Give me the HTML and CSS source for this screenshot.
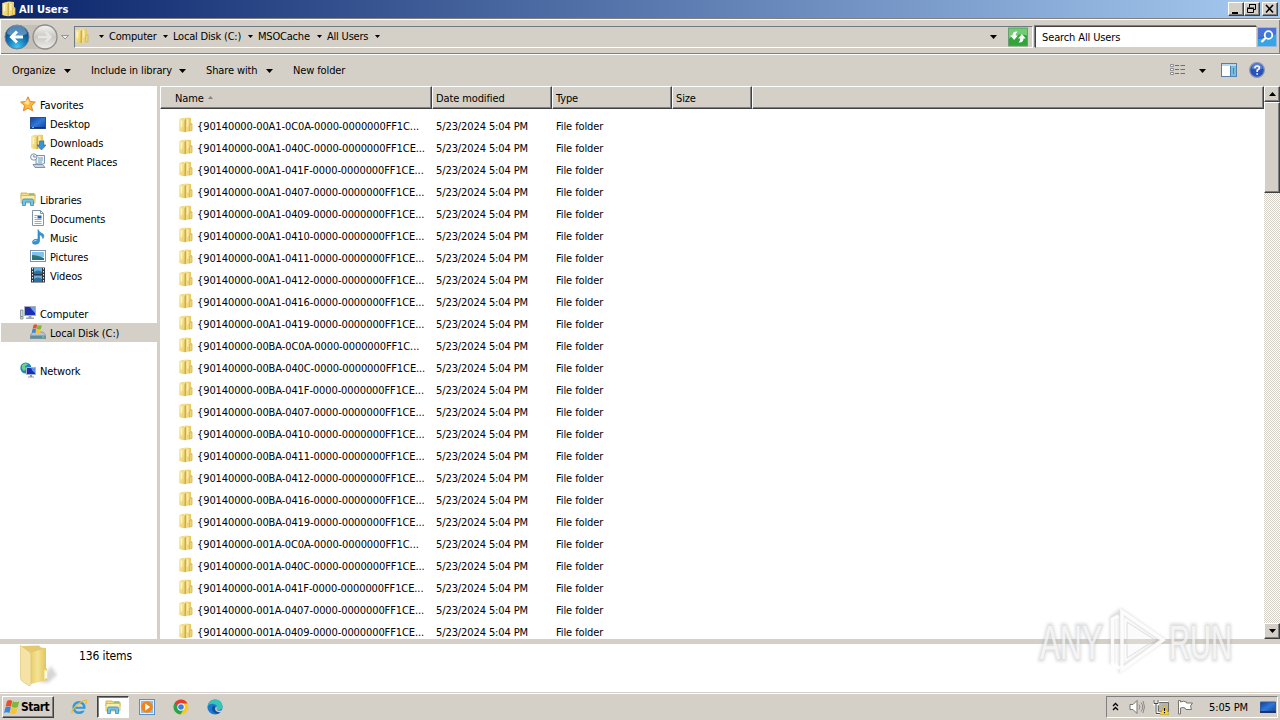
FILE: index.html
```html
<!DOCTYPE html>
<html lang="en">
<head>
  <meta charset="UTF-8" />
  <title>All Users</title>
  <link rel="stylesheet" href="styles.css">
</head>
<body>
  <svg class="defs" width="0" height="0">
    <defs>
      <linearGradient id="gold" x1="0" x2="1" y1="0" y2="0">
        <stop offset="0" stop-color="#e6cc6a" /><stop offset=".45" stop-color="#f5e394" /><stop offset="1" stop-color="#e0c255" />
      </linearGradient>
      <linearGradient id="flap" x1="0" x2="1" y1="0" y2="1">
        <stop offset="0" stop-color="#fbf0b4" /><stop offset="1" stop-color="#e9cd62" />
      </linearGradient>
      <linearGradient id="blue" x1="0" x2="1" y1="0" y2="1">
        <stop offset="0" stop-color="#123f9a" /><stop offset=".5" stop-color="#2f78d8" /><stop offset="1" stop-color="#173f96" />
      </linearGradient>
      <radialGradient id="orb" cx=".5" cy=".9" r=".8">
        <stop offset="0" stop-color="#3fc8f5" /><stop offset=".5" stop-color="#1477b8" /><stop offset="1" stop-color="#0d3f78" />
      </radialGradient>
      <linearGradient id="silver" x1="0" x2="0" y1="0" y2="1">
        <stop offset="0" stop-color="#f4f4f2" /><stop offset=".5" stop-color="#c9c7c3" /><stop offset="1" stop-color="#f0efed" />
      </linearGradient>
      <filter id="soft" x="-20%" y="-20%" width="140%" height="140%"><feGaussianBlur stdDeviation="1.800" /></filter>
      <symbol id="folder" viewBox="0 0 16 16">
        <path d="M1.500 2q3.500-1.500 6.500-1.500L13 1v5l1.200.8v6.700L8 15.300 1.500 14z" fill="url(#gold)" />
        <path d="M1.500 2 6.500 3v12.200l-5-1.200z" fill="url(#flap)" />
        <path d="M6.500 3 8 1.500v13.300l-1.500.4z" fill="#cfab40" />
        <path d="M11.500 7.500 14 6.800v6.700l-2.500.7z" fill="#ecd478" stroke="#caa944" stroke-width=".5" />
        <path d="M3.500 4v6M9.800 2.500v7" stroke="#fffbe0" stroke-width="1.200" opacity=".8" />
      </symbol>
      <symbol id="library" viewBox="0 0 16 16">
        <path d="M1 2h6l1 1h7v4H1z" fill="#f3dc83" stroke="#c9a544" stroke-width=".8" />
        <path d="M1 4.500h14V12H1z" fill="#faeea8" stroke="#cfb052" stroke-width=".8" />
        <path d="M9 3h5" stroke="#53b16b" />
        <path d="M2.500 14.500V9.500q0-1.500 1.500-1.500h8q1.500 0 1.500 1.500v5h-3V11h-5v3.500z" fill="#74c3ea" stroke="#338cc0" stroke-width=".8" />
      </symbol>
      <symbol id="flag" viewBox="0 0 16 16">
        <path d="M3 2q3-2 5.200 0L7 7.700q-2.500-1.500-5.400 0z" fill="#e8502a" />
        <path d="M8.800 2.200q3.200 1.600 6.400.3L13.800 8Q11 9.300 7.600 7.900z" fill="#7db83a" />
        <path d="M1.400 8.400q3-1.600 5.400 0L5.400 14q-2.500-1.600-5.400 0z" fill="#3a86d8" />
        <path d="M7.400 8.600q3.200 1.600 6.200.3L12.200 14.500q-3 1-6.200-.3z" fill="#f7c52e" />
      </symbol>
      <symbol id="down" viewBox="0 0 7 4"><path d="M0 0h7L3.500 4z" /></symbol>
    </defs>
  </svg>

  <div class="titlebar">
    <svg class="icon" viewBox="0 0 16 16"><use href="#folder" /></svg>
    <span class="title-text">All Users</span>
    <div class="win-buttons">
      <span class="win-btn"><svg viewBox="0 0 16 14"><path d="M4 10h6v2H4z" /></svg></span>
      <span class="win-btn"><svg viewBox="0 0 16 14"><path d="M5.500 5.500v-3h6v5h-2M5 2.500h7M3.500 6.500h6v4h-6zM3 6h7" fill="none" stroke="#000" /></svg></span>
      <span class="win-btn win-close"><svg viewBox="0 0 16 14"><path d="m4 3 7 7.500M11 3l-7 7.500" stroke="#000" stroke-width="1.600" /></svg></span>
    </div>
  </div>

  <div class="navbar">
    <svg class="travel" viewBox="0 0 68 30">
      <path d="M14 3h30q4 0 12 6v12q-8 6-12 6H14z" fill="#c4c0b8" />
      <circle cx="16" cy="15" r="12" fill="url(#orb)" stroke="#6d7f92" />
      <path d="M6 12a10 9 0 0 1 20 0q-10 4-20 0z" fill="#8fc0e2" opacity=".55" />
      <path d="M22 15H11M16 9.500 10.500 15l5.500 5.500" fill="none" stroke="#fff" stroke-width="3" />
      <circle cx="44" cy="15" r="12" fill="url(#silver)" stroke="#8f8d88" stroke-width="1.300" />
      <path d="M37 15h12M44.500 10l5 5-5 5" fill="none" stroke="#e6e5e3" stroke-width="2.500" />
      <path d="M60.500 13.500h7L64 17z" fill="#eee" stroke="#85827c" stroke-width=".8" />
    </svg>
    <div class="address">
      <svg class="icon" viewBox="0 0 16 16"><use href="#folder" /></svg>
      <svg class="crumb-arrow first-arrow"><use href="#down" /></svg>
      <div class="crumbs">
        <span class="crumb">Computer<svg class="crumb-arrow"><use href="#down" /></svg></span>
        <span class="crumb">Local Disk (C:)<svg class="crumb-arrow"><use href="#down" /></svg></span>
        <span class="crumb">MSOCache<svg class="crumb-arrow"><use href="#down" /></svg></span>
        <span class="crumb">All Users<svg class="crumb-arrow"><use href="#down" /></svg></span>
      </div>
      <svg class="arrow history"><use href="#down" /></svg>
      <svg class="refresh" viewBox="0 0 20 19">
        <rect x=".5" y=".5" width="19" height="18" fill="#2fa53a" stroke="#6f9b72" />
        <path d="M1 1h18v7Q10 5 1 11z" fill="#72cc76" />
        <path d="M9.500 4Q4.500 3.500 4.500 8H2.200l3.900 4.500L10 8H7.700q0-2 1.800-4zM10.500 15q5 .5 5-4h2.300l-3.900-4.500L10 11h2.300q0 2-1.800 4z" fill="#fff" />
      </svg>
    </div>
    <div class="search">Search All Users</div>
    <svg class="search-btn" viewBox="0 0 20 20">
      <rect x=".5" y=".5" width="19" height="19" fill="#2c67d0" stroke="#9cb6dd" />
      <path d="M1 12q9-1 18-5v12H1z" fill="#36a5e8" />
      <path d="M1 1h18v6Q10 9 1 11z" fill="#4b72d2" />
      <circle cx="11.500" cy="8" r="3.800" fill="#3c7edb" stroke="#fff" stroke-width="1.800" />
      <path d="m8.500 11-4 4" stroke="#fff" stroke-width="2.400" />
    </svg>
  </div>

  <div class="toolbar">
    <div class="commands">
      <span class="command cmd-organize">Organize<svg class="arrow"><use href="#down" /></svg></span>
      <span class="command cmd-include">Include in library<svg class="arrow"><use href="#down" /></svg></span>
      <span class="command cmd-share">Share with<svg class="arrow"><use href="#down" /></svg></span>
      <span class="command">New folder</span>
    </div>
    <div class="view-tools">
      <svg class="view-icon" viewBox="0 0 16 14">
        <path d="M.5 1.500h3v2h-3zM.5 5.500h3v2h-3zM.5 9.500h3v2h-3z" fill="#fff" stroke="#8a8d90" />
        <path d="M5 2.500h4M10.500 2.500H15M5 6.500h4M10.500 6.500H15M5 10.500h4M10.500 10.500H15" stroke="#6b7075" />
      </svg>
      <svg class="arrow view-arrow"><use href="#down" /></svg>
      <svg class="pane-icon" viewBox="0 0 16 14">
        <rect x=".5" y=".5" width="15" height="13" fill="#fff" stroke="#557fa8" />
        <path d="M1 1h14v2H1z" fill="#b9d7ee" /><path d="M10 3h5v10h-5z" fill="#78bce0" /><path d="M9.500 3v10M12.500 5v6" stroke="#4d7fae" />
      </svg>
      <svg class="help-icon" viewBox="0 0 16 16">
        <circle cx="8" cy="8" r="7.400" fill="#2852b8" stroke="#8b9ab5" stroke-width="1.200" />
        <path d="M2.500 6.500a5.500 5 0 0 1 11 0q-5 2-11 0z" fill="#7d9ee2" opacity=".6" />
        <path d="M5.800 6.200Q6 4 8.200 4t2.200 2Q10.400 7.300 8.200 8.300V10M8.200 11.200v1.600" fill="none" stroke="#fff" stroke-width="1.600" />
      </svg>
    </div>
  </div>

  <div class="content">
    <div class="sidebar">
      <div class="nav-item nav-root">
        <svg class="icon" viewBox="0 0 16 16"><path d="m8 .8 2.200 4.700 5.200.6-3.900 3.500 1.100 5.200L8 12.200l-4.600 2.600 1.100-5.200L.6 6.100l5.200-.6z" fill="#fbb740" stroke="#e07d1e" stroke-width=".9" /><path d="m8 3 1.500 3.500L8 9 4 7z" fill="#ffe39a" /></svg>
        <span>Favorites</span>
      </div>
      <div class="nav-item">
        <svg class="icon" viewBox="0 0 16 16"><rect x=".5" y="2.500" width="15" height="11" fill="url(#blue)" stroke="#2b4f8d" /><path d="M1 12h14v1.500H1z" fill="#1c3560" /><path d="M2 12.500h2" stroke="#6bd16b" /></svg>
        <span>Desktop</span>
      </div>
      <div class="nav-item">
        <svg class="icon" viewBox="0 0 16 16"><use href="#folder" /><path d="M9.500 7h4v4H16l-4.500 5L7 11h2.500z" fill="#3793dd" stroke="#1b65ad" stroke-width=".6" /></svg>
        <span>Downloads</span>
      </div>
      <div class="nav-item">
        <svg class="icon" viewBox="0 0 16 16"><path d="M6 2.500h8.500v8l-2 .5H6z" fill="#eef3f7" stroke="#7f93a6" /><path d="M3 11.500h9.500l2.500 3H5z" fill="#c9d6e2" stroke="#7f93a6" /><path d="M8 5h5M8 7h5M8 9h4" stroke="#6a9ac6" /><circle cx="3.800" cy="4" r="3.200" fill="#f4f8fb" stroke="#7f93a6" /><path d="M3.800 2v2h2" fill="none" stroke="#496c91" stroke-width=".8" /></svg>
        <span>Recent Places</span>
      </div>
      <div class="nav-item nav-root nav-group">
        <svg class="icon" viewBox="0 0 16 16"><use href="#library" /></svg>
        <span>Libraries</span>
      </div>
      <div class="nav-item">
        <svg class="icon" viewBox="0 0 16 16"><path d="M2.500.5h8l3 3v12h-11z" fill="#fff" stroke="#8395a8" /><path d="M10.500.5v3h3" fill="none" stroke="#8395a8" /><path d="M4.500 5.500h3M4.500 7.500h2M4.500 9.500h7M4.500 11.500h7M4.500 13.500h7" stroke="#95abc4" /><path d="M7.500 5.500h4v3h-4z" fill="#2664a6" /></svg>
        <span>Documents</span>
      </div>
      <div class="nav-item">
        <svg class="icon" viewBox="0 0 16 16"><path d="M8 .5q1 3 4 4t1 5q-.5-3-3.500-4V12q0 3-4 3.300-3.500 0-3-2.600.6-2.500 4-2.400H8z" fill="#3197d6" stroke="#2273b5" stroke-width=".6" /><path d="M3.500 12.500q1-1.500 3-1" stroke="#a5dcf8" fill="none" /></svg>
        <span>Music</span>
      </div>
      <div class="nav-item">
        <svg class="icon" viewBox="0 0 16 16"><rect x=".5" y="2.500" width="15" height="11" fill="#fff" stroke="#7d94ac" /><path d="M2 4h12v5H2z" fill="#80c3ec" /><path d="M2 7q5 0 12 3v2H2z" fill="#2c7c61" /><path d="M2 10.500q6-1 12 .5v1H2z" fill="#276ba4" /></svg>
        <span>Pictures</span>
      </div>
      <div class="nav-item">
        <svg class="icon" viewBox="0 0 16 16"><path d="M1 .5h14v15H1z" fill="#30363d" /><path d="M4 1h8v6H4zM4 8.500h8V15H4z" fill="#6aaedd" /><path d="M4 5q4-3 8 0v2H4zM4 12q4-3 8 0v3H4z" fill="#2f6f9f" /><path d="M2.500 1v14M13.500 1v14" stroke="#e8edf2" stroke-dasharray="1.500 1.500" /></svg>
        <span>Videos</span>
      </div>
      <div class="nav-item nav-root nav-group">
        <svg class="icon" viewBox="0 0 16 16"><path d="M.5 5h2.500v9H.5z" fill="#d3d8dc" stroke="#7b858f" stroke-width=".8" /><path d="M1 11.500h1.500" stroke="#3dae3d" /><path d="M4.500 1.500h11v9h-11z" fill="#1c2fae" stroke="#a8b0c0" /><path d="M10 2h5v6q-3-3-5-6z" fill="#6f9ef0" /><path d="M8.500 11h3v1.500H14V14H6v-1.500h2.500z" fill="#9ba5b2" /></svg>
        <span>Computer</span>
      </div>
      <div class="nav-item nav-selected">
        <svg class="icon" viewBox="0 0 16 16"><path d="M3 8h10l3 3.500v3H0v-3z" fill="#b6c4cd" stroke="#6b7c88" stroke-width=".6" /><path d="M.3 11.500h15.400v3H.3z" fill="#5e8d9f" /><path d="M12 13h2" stroke="#7bea86" /><svg x="1.500" y="-.5" width="11" height="11"><use href="#flag" /></svg></svg>
        <span>Local Disk (C:)</span>
      </div>
      <div class="nav-item nav-root nav-group">
        <svg class="icon" viewBox="0 0 16 16"><circle cx="5.800" cy="6" r="5.500" fill="#1d86b8" /><path d="M2 3q3-3 6-1-1 2-3 2l1 3-2 2Q1 7 2 3z" fill="#6fcf87" /><path d="M6.500 5.500h9v7h-9z" fill="#1a2fae" stroke="#a9b6ca" /><path d="M11 6h4v5q-3-2-4-5z" fill="#5f93ec" /><path d="M10 13h2v1.500h2v1H8v-1h2z" fill="#8a98a8" /></svg>
        <span>Network</span>
      </div>
    </div>

    <div class="file-pane">
      <div class="list-header">
        <span class="col col-name">Name<svg class="sort" viewBox="0 0 5 3"><path d="M2.500 0 5 3H0z" fill="#87837c" /></svg></span>
        <span class="col col-date">Date modified</span>
        <span class="col col-type">Type</span>
        <span class="col col-size">Size</span>
        <span class="col col-rest"></span>
      </div>
      <div class="file-list" id="file-list"></div>
    </div>

    <div class="scrollbar">
      <span class="scroll-btn"><svg class="arrow" viewBox="0 0 7 4"><path d="M3.500 0 7 4H0z" /></svg></span>
      <span class="scroll-thumb"></span>
      <span class="scroll-btn scroll-end"><svg class="arrow"><use href="#down" /></svg></span>
    </div>
  </div>

  <div class="details">
    <svg class="big-folder" viewBox="0 0 40 44">
      <path d="M20 38 32 22l6 9-9 8z" fill="#999" opacity=".4" filter="url(#soft)" />
      <path d="M3 2 20 1.500l2 2 4 .5v12L12 20z" fill="#e3ca72" />
      <path d="M11 9 27 4v20l1 1v11l-16 4z" fill="url(#gold)" />
      <path d="M1.500 1.500 10 7.500q2 1.500 2 4v28q0 3-2.500 2l-6-4Q1.500 36 1.500 33z" fill="#f5e3a6" stroke="#dcc069" stroke-width=".6" />
      <path d="M25 26q3.500-1 3.500 2v6.500L25 36z" fill="#f6e8a4" /><path d="M27 27v7" stroke="#fff" stroke-width="1.500" />
    </svg>
    <span class="item-count">136 items</span>
  </div>

  <div class="taskbar">
    <div class="start"><svg viewBox="0 0 16 16"><use href="#flag" /></svg><span>Start</span></div>
    <div class="task">
      <svg viewBox="0 0 16 16"><circle cx="8" cy="8.500" r="5.300" fill="none" stroke="#2d9be0" stroke-width="2.600" /><path d="M4 8.800h10" stroke="#2d9be0" stroke-width="2" /><path d="M10.500 10.800H15" stroke="#d4d0c8" stroke-width="1.800" /><path d="M1.500 14.500Q-.5 13 4 8t9-6.500 1.500 3.500" fill="none" stroke="#eebd32" stroke-width="1.300" /></svg>
    </div>
    <div class="task task-active"><svg viewBox="0 0 16 16"><use href="#library" /></svg></div>
    <div class="task">
      <svg viewBox="0 0 16 16"><rect x=".5" y=".5" width="15" height="15" fill="#e7f0f8" stroke="#5b91c6" /><rect x="2" y="2" width="12" height="12" fill="#93bce0" /><circle cx="8" cy="8" r="5.800" fill="#f08519" /><path d="m6.200 4.500 5 3.500-5 3.500z" fill="#fff" /></svg>
    </div>
    <div class="task">
      <svg viewBox="0 0 16 16"><circle cx="8" cy="8" r="7.500" fill="#f9c921" /><path d="M1.500 4.200A7.500 7.500 0 0 0 7.500 15.500L11 9.700 8 8z" fill="#2ba24c" /><path d="M1.500 4.200a7.500 7.500 0 0 1 13 .2H8L5 8z" fill="#e13d2f" /><circle cx="8" cy="8" r="3.700" fill="#fff" /><circle cx="8" cy="8" r="2.800" fill="#3d7de8" /></svg>
    </div>
    <div class="task">
      <svg viewBox="0 0 16 16"><circle cx="8" cy="8" r="7.600" fill="#1b78cc" /><path d="M.6 7Q2 .4 8.500.4q6.500.4 7.100 6.600 0 4-4 4-3 0-2-2 1-3-2.500-4Q3 4 .6 7z" fill="#39c3b4" /><path d="M6 7q-3 4 2 7 3 1.500 5.500-.5-3 .5-5-2-1.500-2-.5-4.500z" fill="#0f4f9e" /><path d="M9 7.500q1.500 1 .5 2.800.5 1.500 4 1.500l2.300-.8-1.600 2q-4 .6-5.500-1.500-1-2 .3-4z" fill="#d4d0c8" /></svg>
    </div>
    <div class="tray">
      <svg class="tray-more" viewBox="0 0 7 9"><path d="m1 4 2.500-2.500L6 4M1 8l2.500-2.500L6 8" fill="none" stroke="#000" stroke-width="1.300" /></svg>
      <svg class="tray-icon" viewBox="0 0 16 16"><path d="M1 5.500h3l4-4v13l-4-4H1z" fill="#fff" stroke="#77746f" /><path d="M10 5.500q2 2.500 0 5M12 3.500q3.500 4.500 0 9M14 2q3 6 0 12" fill="none" stroke="#8b8883" /></svg>
      <svg class="tray-icon tray-network" viewBox="0 0 16 16"><path d="M5.500 3.500h10v9h-10z" fill="#b8b5ae" stroke="#6d6b67" /><path d="M6 2.500h9M4 15h5" stroke="#fff" /><path d="M1 1v4h4V1M3 5v9h5" fill="none" stroke="#fff" stroke-width="2.400" /><path d="M1 1v3.500h4V1M3 5v9.500h4" fill="none" stroke="#4b4a48" /><path d="m11.500 6 4.500 9.500H7z" fill="#fbd82c" stroke="#c49a15" stroke-width=".6" /><path d="M11.500 9v3M11.500 13v1.300" stroke="#000" stroke-width="1.200" /></svg>
      <svg class="tray-icon tray-flag" viewBox="0 0 16 16"><path d="M1.500 1.500h2V3q3-1.500 6 0v1h6l-2 3 1 3.500H9L8 9q-2-1-4.500 0v6h-2z" fill="#fff" stroke="#77746f" /></svg>
      <span class="clock">5:05 PM</span>
      <svg class="tray-icon" viewBox="0 0 16 16"><path d="M.5 3h15v10H.5z" fill="url(#blue)" stroke="#365a95" /><path d="M0 12h16v2H0z" fill="#1a3470" /></svg>
    </div>
  </div>

  <svg class="watermark" viewBox="0 0 240 80">
    <g class="mark-halo">
      <path d="M82 64V18l9-7 41 29-41 29V14" />
      <text class="mark-text" x="10" y="59" textLength="62" lengthAdjust="spacingAndGlyphs">ANY</text>
      <text class="mark-text" x="139" y="59" textLength="63" lengthAdjust="spacingAndGlyphs">RUN</text>
    </g>
    <g class="mark-face">
      <path d="M90 68.500 82.500 64V19l6-3M92 69.500V11.500l41 28.500z" />
    </g>
    <path d="M97 22l28 18-28 18z" fill="#eee" fill-opacity=".25" stroke="#d6d6d6" stroke-width=".8" />
    <text class="mark-text" x="10" y="59" textLength="62" lengthAdjust="spacingAndGlyphs">ANY</text>
    <text class="mark-text" x="139" y="59" textLength="63" lengthAdjust="spacingAndGlyphs">RUN</text>
  </svg>

  <script src="script.js"></script>
</body>
</html>
```
FILE: styles.css
```css
* {
  box-sizing: border-box;
}

body {
  margin: 0;
  width: 1280px;
  height: 720px;
  overflow: hidden;
  position: relative;
  display: flex;
  flex-direction: column;
  background: #d4d0c8;
  color: #000;
  font-family: Tahoma, "DejaVu Sans Condensed", "DejaVu Sans", sans-serif;
  font-stretch: condensed;
  font-size: 11px;
  letter-spacing: -0.12px;
  line-height: 14px;
  white-space: nowrap;
}

svg {
  display: block;
  flex: none;
}

.defs {
  position: absolute;
}

.icon {
  width: 16px;
  height: 16px;
}

.arrow {
  width: 7px;
  height: 4px;
}

/* title bar */
.titlebar {
  height: 18px;
  flex: none;
  display: flex;
  align-items: center;
  padding: 0 2px 0 1px;
  background: linear-gradient(90deg, #0a246a, #a6caf0);
}

.title-text {
  margin-left: 2px;
  padding-top: 1px;
  color: #fff;
  font-weight: bold;
  letter-spacing: 0;
}

.win-buttons {
  display: flex;
  margin-left: auto;
}

.win-btn {
  width: 16px;
  height: 14px;
}

.win-btn, .scroll-btn, .scroll-thumb, .start {
  background: #d4d0c8;
  border: 1px solid;
  border-color: #fff #404040 #404040 #fff;
  box-shadow: inset -1px -1px #808080;
}

.win-btn svg {
  width: 16px;
  height: 14px;
  margin: -1px;
}

.win-close {
  margin-left: 2px;
}

/* address row */
.navbar {
  height: 37px;
  flex: none;
  display: flex;
  align-items: center;
  padding: 0 2px;
  border-top: 1px solid #808080;
  border-bottom: 1px solid #fff;
  box-shadow: inset 0 1px #fff, inset 1px 0 #fff, inset -1px 0 #808080, inset 0 -1px #808080;
}

.travel {
  width: 68px;
  height: 30px;
  margin-left: -1px;
}

.address {
  width: 959px;
  height: 22px;
  flex: none;
  margin-left: 5px;
  display: flex;
  align-items: center;
  border: 1px solid;
  border-color: #6f7a82 #fff #fff #6f7a82;
}

.address .icon {
  margin: -2px 0 0 -1px;
}

.crumb-arrow {
  width: 5px;
  height: 3px;
}

.first-arrow {
  margin-left: 9px;
}

.crumbs {
  display: grid;
  grid-template-columns: 59px 80px 64px 53px;
  column-gap: 5px;
  margin-left: 5px;
  letter-spacing: -0.2px;
}

.crumb {
  display: flex;
  align-items: center;
  justify-content: space-between;
}

.history {
  margin-left: auto;
}

.refresh {
  width: 20px;
  height: 20px;
  margin: 0 4px 0 11px;
}

.search {
  width: 222px;
  height: 22px;
  flex: none;
  margin-left: 2px;
  padding: 4px 6px;
  background: #fff;
  border: 1px solid;
  border-color: #404040 #d4d0c8 #d4d0c8 #404040;
  box-shadow: -1px -1px #808080;
}

.search-btn {
  width: 20px;
  height: 20px;
}

/* command bar */
.toolbar {
  height: 31px;
  flex: none;
  display: flex;
  align-items: center;
  justify-content: space-between;
  padding: 0 15px 0 12px;
}

.commands {
  display: flex;
  gap: 20px;
}

.command {
  display: flex;
  align-items: center;
  justify-content: space-between;
}

.cmd-organize {
  width: 59px;
}

.cmd-include {
  width: 95px;
}

.cmd-share {
  width: 67px;
}

.view-tools {
  display: flex;
  align-items: center;
}

.view-icon, .pane-icon {
  width: 16px;
  height: 14px;
  margin-top: -1px;
}

.view-arrow {
  margin: 0 15px 0 13px;
}

.help-icon {
  width: 16px;
  height: 16px;
  margin: -1px 0 0 12px;
}

/* main area */
.content {
  height: 553px;
  flex: none;
  display: flex;
  background: #fff;
}

.sidebar {
  width: 160px;
  flex: none;
  padding-top: 9px;
  border-right: 3px solid #d4d0c8;
}

.nav-item {
  height: 19px;
  display: flex;
  align-items: center;
  gap: 4px;
  margin-left: 1px;
  padding-left: 29px;
}

.nav-item .icon {
  margin-top: -1px;
}

.nav-item span {
  padding-top: 2px;
}

.nav-root {
  padding-left: 19px;
}

.nav-group {
  margin-top: 19px;
}

.nav-selected {
  background: #d4d0c8;
}

.file-pane {
  flex: 1;
  overflow: hidden;
}

.list-header {
  display: flex;
  height: 23px;
}

.col {
  display: flex;
  align-items: center;
  padding: 2px 0 0 3px;
  background: #d4d0c8;
  border: 1px solid;
  border-color: #fff #404040 #404040 #fff;
  box-shadow: inset -1px -1px #808080;
}

.col-name {
  width: 272px;
  padding-left: 14px;
}

.col-date, .col-type {
  width: 120px;
}

.col-size {
  width: 80px;
}

.col-rest {
  flex: 1;
}

.sort {
  width: 5px;
  height: 3px;
  margin: -3px 0 0 4px;
}

.file-list {
  padding-top: 7px;
}

.file-row {
  height: 22px;
  display: grid;
  grid-template-columns: 20px 239px 120px 1fr;
  align-items: center;
  padding-left: 17px;
  letter-spacing: -0.1px;
}

.file-row .icon {
  margin: -4px 0 0 1px;
}

.scrollbar {
  width: 16px;
  flex: none;
  display: flex;
  flex-direction: column;
  background: repeating-conic-gradient(#fff 0 25%, #d4d0c8 0 50%) 0 0 / 2px 2px;
}

.scroll-btn {
  height: 16px;
  display: flex;
  align-items: center;
  justify-content: center;
}

.scroll-thumb {
  height: 91px;
}

.scroll-end {
  margin-top: auto;
}

/* details pane */
.details {
  height: 53px;
  flex: none;
  display: flex;
  padding-left: 19px;
  background: #fff;
  border-top: 5px solid #d4d0c8;
}

.big-folder {
  width: 40px;
  height: 44px;
}

.item-count {
  margin: 5px 0 0 20px;
  font-size: 12px;
}

/* taskbar */
.taskbar {
  height: 28px;
  flex: none;
  display: flex;
  align-items: center;
  padding: 1px 2px 0;
  border-top: 1px solid #d4d0c8;
  box-shadow: inset 0 1px #fff;
}

.start {
  width: 52px;
  height: 22px;
  margin-right: 9px;
  padding-left: 1px;
  display: flex;
  align-items: center;
  gap: 1px;
  font-size: 12px;
  font-weight: bold;
  letter-spacing: -0.5px;
}

.start svg, .task svg {
  width: 16px;
  height: 16px;
}

.task {
  width: 32px;
  height: 22px;
  margin-right: 2px;
  display: flex;
  align-items: center;
  justify-content: center;
}

.task-active {
  background: #fff;
  border: 1px solid;
  border-color: #404040 #fff #fff #404040;
  box-shadow: inset 1px 1px #808080;
}

.tray {
  width: 172px;
  height: 22px;
  margin-left: auto;
  padding-left: 5px;
  display: flex;
  align-items: center;
  border: 1px solid;
  border-color: #808080 #fff #fff #808080;
}

.tray-more {
  width: 7px;
  height: 9px;
  margin: -2px 10px 0 0;
}

.tray-icon {
  width: 16px;
  height: 16px;
}

.tray-network, .tray-flag {
  margin-left: 8px;
}

.clock {
  width: 40px;
  margin: 1px 11px 0 16px;
}

/* logo laid over the lower right corner */
.watermark {
  position: absolute;
  left: 1030px;
  top: 600px;
  width: 240px;
  height: 80px;
}

.mark-text {
  font-family: "Liberation Sans", Arial, sans-serif;
  font-size: 48px;
  letter-spacing: 0;
  fill: #fff;
  fill-opacity: 0.7;
}

.mark-halo {
  fill: none;
  stroke: #aaa;
  stroke-width: 5px;
  opacity: 0.4;
  filter: url(#soft);
}

.mark-face {
  fill: none;
  stroke: #fff;
  stroke-width: 3.5px;
  opacity: 0.9;
}
```
FILE: script.js
```js
const names = [
  '00A1-0C0A', '00A1-040C', '00A1-041F', '00A1-0407', '00A1-0409', '00A1-0410',
  '00A1-0411', '00A1-0412', '00A1-0416', '00A1-0419', '00BA-0C0A', '00BA-040C',
  '00BA-041F', '00BA-0407', '00BA-0410', '00BA-0411', '00BA-0412', '00BA-0416',
  '00BA-0419', '001A-0C0A', '001A-040C', '001A-041F', '001A-0407', '001A-0409'
];

const list = document.querySelector('#file-list');

names.forEach(name => {
  // names with 0C0A are wider, so they are cut one letter earlier
  const tail = name.endsWith('0C0A') ? 'FF1C...' : 'FF1CE...';
  const row = document.createElement('div');
  row.className = 'file-row';
  row.innerHTML = `
    <svg class="icon" viewBox="0 0 16 16"><use href="#folder" /></svg>
    <span>{90140000-${name}-0000-0000000${tail}</span>
    <span>5/23/2024 5:04 PM</span>
    <span>File folder</span>
  `;
  list.appendChild(row);
});
```
